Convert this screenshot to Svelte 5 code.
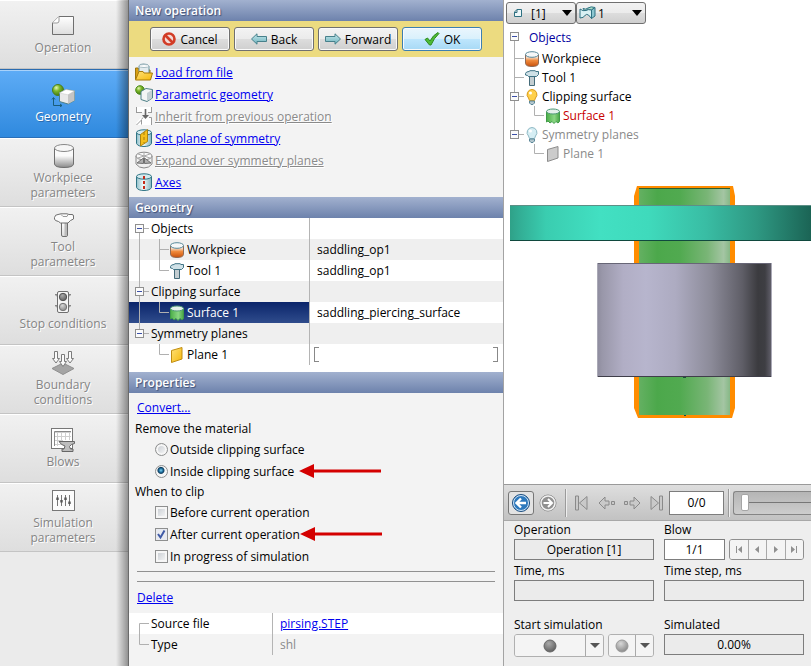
<script lang="ts">
  type Row = { label: string; icon?: string; value?: string; last?: boolean; selected?: boolean; field?: boolean };

  const steps = [
    { id: 'operation', label: 'Operation' },
    { id: 'geometry', label: 'Geometry' },
    { id: 'workpiece', label: 'Workpiece parameters' },
    { id: 'tool', label: 'Tool parameters' },
    { id: 'stop', label: 'Stop conditions' },
    { id: 'boundary', label: 'Boundary conditions' },
    { id: 'blows', label: 'Blows' },
    { id: 'simulation', label: 'Simulation parameters' }
  ];

  const actions = [
    { label: 'Load from file', icon: 'folder' },
    { label: 'Parametric geometry', icon: 'parametric' },
    { label: 'Inherit from previous operation', icon: 'inherit', disabled: true },
    { label: 'Set plane of symmetry', icon: 'symmetry' },
    { label: 'Expand over symmetry planes', icon: 'expand', disabled: true },
    { label: 'Axes', icon: 'axes' }
  ];

  const rows: Row[] = [
    { label: 'Objects' },
    { label: 'Workpiece', icon: 'billet', value: 'saddling_op1' },
    { label: 'Tool 1', icon: 'hammer', value: 'saddling_op1', last: true },
    { label: 'Clipping surface' },
    { label: 'Surface 1', icon: 'surface', value: 'saddling_piercing_surface', last: true, selected: true },
    { label: 'Symmetry planes' },
    { label: 'Plane 1', icon: 'plane', last: true, field: true }
  ];

  const sceneTree = [
    { label: 'Workpiece', icon: 'billet' },
    { label: 'Tool 1', icon: 'hammer' },
    { label: 'Clipping surface', icon: 'bulb', group: true },
    { label: 'Surface 1', icon: 'surface', child: true, tone: 'red' },
    { label: 'Symmetry planes', icon: 'bulb-off', group: true, end: true, tone: 'muted' },
    { label: 'Plane 1', icon: 'plane-off', child: true, end: true, tone: 'muted' }
  ];

  let activeStep = $state('geometry');
  let side = $state('inside');
  let before = $state(false);
  let after = $state(true);
  let during = $state(false);
</script>

<!-- Shared gradients -->
<svg class="defs" width="0" height="0" aria-hidden="true">
  <defs>
    <linearGradient id="g-page" x1="0" y1="0" x2="0" y2="1"><stop offset="0" stop-color="#fff" /><stop offset="1" stop-color="#ddd" /></linearGradient>
    <linearGradient id="g-cyl" x1="0" y1="0" x2="0" y2="1"><stop offset="0.4" stop-color="#fafafa" /><stop offset="1" stop-color="#8b8b8b" /></linearGradient>
    <linearGradient id="g-billet" x1="0" y1="0" x2="0" y2="1"><stop offset="0.15" stop-color="#f4f4f4" /><stop offset="0.5" stop-color="#f08a3c" /><stop offset="1" stop-color="#c8500a" /></linearGradient>
    <linearGradient id="g-surface" x1="0" y1="0" x2="1" y2="0"><stop offset="0" stop-color="#4cae48" /><stop offset="0.6" stop-color="#8ad683" /><stop offset="1" stop-color="#48a545" /></linearGradient>
    <linearGradient id="g-glass" x1="0" y1="0" x2="1" y2="0"><stop offset="0" stop-color="#8fbfc9" /><stop offset="0.45" stop-color="#f4fbfc" /><stop offset="1" stop-color="#83b5c0" /></linearGradient>
    <linearGradient id="g-gold" x1="0" y1="0" x2="1" y2="1"><stop offset="0" stop-color="#ffe27a" /><stop offset="1" stop-color="#f5b80a" /></linearGradient>
    <radialGradient id="g-ball" cx="0.35" cy="0.3" r="0.75"><stop offset="0" stop-color="#e4f7b4" /><stop offset="0.4" stop-color="#7db82a" /><stop offset="1" stop-color="#3d7310" /></radialGradient>
    <radialGradient id="g-grayball" cx="0.4" cy="0.3" r="0.75"><stop offset="0" stop-color="#aaa" /><stop offset="1" stop-color="#5c5c5c" /></radialGradient>
    <radialGradient id="g-lightball" cx="0.4" cy="0.3" r="0.75"><stop offset="0" stop-color="#d8d8d8" /><stop offset="1" stop-color="#858585" /></radialGradient>
    <linearGradient id="g-arrow" x1="0" y1="0" x2="0" y2="1"><stop offset="0" stop-color="#c6e8ec" /><stop offset="1" stop-color="#6db2bd" /></linearGradient>
    <linearGradient id="g-teal"><stop offset="0" stop-color="#2fa188" /><stop offset="0.03" stop-color="#32ad94" /><stop offset="0.12" stop-color="#3acdb0" /><stop offset="0.3" stop-color="#42e0c2" /><stop offset="0.46" stop-color="#3fdabc" /><stop offset="0.65" stop-color="#39bda4" /><stop offset="0.82" stop-color="#2e9882" /><stop offset="1" stop-color="#1b6455" /></linearGradient>
    <linearGradient id="g-green"><stop offset="0" stop-color="#64b062" /><stop offset="0.2" stop-color="#4ca84b" /><stop offset="0.45" stop-color="#51aa50" /><stop offset="0.75" stop-color="#79b576" /><stop offset="0.93" stop-color="#a4c5a3" /><stop offset="1" stop-color="#86b886" /></linearGradient>
    <linearGradient id="g-steel"><stop offset="0" stop-color="#8d8b9d" /><stop offset="0.03" stop-color="#9997a9" /><stop offset="0.15" stop-color="#b1aec5" /><stop offset="0.28" stop-color="#b7b5cd" /><stop offset="0.45" stop-color="#adabc1" /><stop offset="0.65" stop-color="#8c8b99" /><stop offset="0.83" stop-color="#5f5e67" /><stop offset="0.92" stop-color="#3b3b3f" /><stop offset="0.96" stop-color="#3e3e43" /><stop offset="1" stop-color="#65636f" /></linearGradient>
  </defs>
</svg>

{#snippet stepIcon(id: string)}
  <svg class="step-icon" width="24" height="24" viewBox="0 0 24 24" fill="none" stroke="#6f6f6f" aria-hidden="true">
    {#if id === 'operation'}
      <path d="M1.5 9 L8 2.5 H22.5 V20.5 H1.5 Z" fill="url(#g-page)" />
      <path d="M1.5 9 H6 Q8 9 8 7 V2.5" fill="#fff" stroke="#999" />
    {:else if id === 'geometry'}
      <circle cx="7" cy="7" r="5.5" fill="url(#g-ball)" stroke="#4c7f1c" />
      <path d="M8.5 10 L15 6.5 L23.5 8 V17.5 L17 21 L8.5 18.5 Z" fill="#e9e9e9" stroke="#4d8087" />
      <path d="M8.5 10 L15 6.5 L23.5 8 L17 11.8 Z" fill="#fff" stroke="#cfcfcf" stroke-width="0.6" />
      <path d="M17 11.8 L23.5 8 V17.5 L17 21 Z" fill="#c4c4c4" stroke="none" />
      <path d="M2.5 15 V22.5 H11 M1 16.5 L2.5 14.5 L4 16.5 M9 21 L11 22.5 L9 24" stroke="#1a5d78" />
    {:else if id === 'workpiece'}
      <path d="M3.5 4 V20 Q4 23.5 13 23.5 T22.5 20 V4" fill="url(#g-cyl)" />
      <ellipse cx="13" cy="4" rx="9.5" ry="3.5" fill="#f6f6f6" stroke="#888" />
    {:else if id === 'tool'}
      <path d="M10.5 9 H16.5 V22 Q16.5 23.5 15 23.5 H12 Q10.5 23.5 10.5 22 Z" fill="url(#g-page)" />
      <path d="M13.5 10 H16 V23 H13.5 Z" fill="#bbb" stroke="none" />
      <path d="M3.5 4.5 Q4 1.5 7 1.5 L10 0.8 H16 L18 1.5 H21 Q22.5 1.5 22.5 3 V6 L19.5 7.5 L17 10 H9.5 L7.5 8.5 L4.5 7.5 Q3 6 3.5 4.5 Z" fill="#fbfbfb" />
      <path d="M10 1.5 L12 3.5 H16 L17 1.5" stroke="#999" />
    {:else if id === 'stop'}
      <path d="M4 4.5 H7 V7 Z M20 4.5 H17 V7 Z M4 15.5 H7 V18 Z M20 15.5 H17 V18 Z" fill="#eee" stroke="#888" />
      <rect x="6.5" y="1.5" width="11" height="21" rx="1.5" fill="#f6f6f6" />
      <circle cx="12" cy="7" r="3.7" fill="url(#g-grayball)" stroke="#555" />
      <circle cx="12" cy="17" r="3.7" fill="url(#g-lightball)" stroke="#777" />
    {:else if id === 'boundary'}
      <path d="M1 17.5 L12 12 L23 17.5 L12 23.5 Z" fill="#a5a5a5" stroke="#8f8f8f" />
      <path d="M3.5 0.5 H6.5 V7.5 H8.5 L5 12 L1.5 7.5 H3.5 Z M17.5 0.5 H20.5 V7.5 H22.5 L19 12 L15.5 7.5 H17.5 Z M10.5 3.5 H13.5 V10.5 H15.5 L12 15.5 L8.5 10.5 H10.5 Z" fill="#fafafa" stroke="#7b7b7b" />
    {:else if id === 'blows'}
      <rect x="0.5" y="0.5" width="21" height="20" fill="#fff" stroke="#777" />
      <path d="M3 4.5 H20 M3 8.5 H20 M3 12.5 H12 M3 16.5 H10 M6.5 3 V18 M10.5 3 V17 M14.5 3 V12 M18.5 3 V12" stroke="#cfcfcf" />
      <path d="M3.5 18 V3.5 H20" stroke="#888" />
      <path d="M8 13.5 H23.5 V15.5 Q20 16 18.5 18.5 L19.5 21 H22 V23.5 H11 V21 H13 L14 18 Q10 17 8 13.5 Z" fill="#bdbdbd" stroke="#666" />
    {:else}
      <rect x="1.5" y="1.5" width="22" height="20" fill="#fcfcfc" stroke="#777" />
      <path d="M6.5 6 V17 M10.5 6 V17 M14.5 6 V17 M18.5 6 V17" stroke="#777" />
      <path d="M6.5 8.5 V11 M10.5 11 V13.5 M14.5 8.5 V11 M18.5 12.5 V15" stroke="#555" stroke-width="2.4" />
    {/if}
  </svg>
{/snippet}

{#snippet glyph(name: string)}
  <svg class="glyph" width="18" height="18" viewBox="0 0 18 18" fill="none" stroke="#2f7485" aria-hidden="true">
    {#if name === 'folder'}
      <path d="M0.5 16 V5 H3 L4.5 7 H15 V16 Z" fill="#d99f13" stroke="#9a7410" />
      <path d="M4 11 V3 Q4 1 8.5 1 T14 3 V11 Z" fill="#e3ebee" stroke="#6b94a0" />
      <ellipse cx="9" cy="3" rx="5" ry="1.5" fill="#fff" stroke="#a7bcc3" />
      <path d="M0.5 17 L4 8.5 H8 L9 10 H17.5 L15.5 17 Z" fill="url(#g-gold)" stroke="#a87b0b" />
    {:else if name === 'parametric'}
      <circle cx="5" cy="5" r="4.3" fill="url(#g-ball)" stroke="#4c8a1c" />
      <path d="M6 6.5 L11 3.5 L17.5 4.5 V13 L12 16.5 L6 14.5 Z" fill="#f3f5f5" stroke="#4d8087" />
      <path d="M12 8 L17 5 V13 L12 16 Z" fill="#c3cfd2" stroke="none" />
    {:else if name === 'inherit'}
      <path d="M1.5 0 V5.5 H16.5 V0" fill="#fff" stroke="none" />
      <path d="M1 5.5 H7 M13 5.5 H17 M1.5 0 V5 M16.5 0 V5" stroke="#9a9a9a" />
      <path d="M1.5 18 V15.5 L6 10.5 H16.5 V18" fill="#fff" stroke="none" />
      <path d="M1.5 18 L6.5 13 V17.5 M6.5 12.5 L8 10.5 M14 10.5 H16.5 V18" stroke="#9a9a9a" />
      <path d="M10.5 2 V8" stroke="#666" stroke-width="1.6" />
      <path d="M7 8 H14 L10.5 12 Z" fill="#666" stroke="none" />
    {:else if name === 'symmetry' || name === 'axes'}
      <path d="M1.5 3.5 V14.5 Q3 17.5 9 17.5 T16.5 14.5 V3.5" fill="url(#g-glass)" />
      <ellipse cx="9" cy="3.5" rx="7.5" ry="2.7" fill="#d3e9ed" />
      {#if name === 'symmetry'}
        <path d="M5.5 5.5 L12.5 0.5 V12.5 L5.5 17 Z" fill="#f4bf1c" stroke="#ad8412" />
        <path d="M9 3 V14" stroke="#a77d08" stroke-dasharray="3 2" />
      {:else}
        <path d="M9 3 V16" stroke="#c62b1a" stroke-width="2" stroke-dasharray="3 2" />
      {/if}
    {:else if name === 'expand'}
      <path d="M1 5 V13 Q4 17 9 17 T17 13 V5" fill="#f0f0f0" stroke="#888" />
      <ellipse cx="9" cy="5" rx="8" ry="3.8" fill="#fafafa" stroke="#888" />
      <path d="M9 1 V8 M3 3 L15 7 M15 3 L3 7" stroke="#aaa" />
      <path d="M2 12 L8.5 7 V12.5 Z M9.5 7 L16 12 L9.5 12.5 Z" fill="#b0b0b0" stroke="#707070" />
    {/if}
  </svg>
{/snippet}

{#snippet node(name: string)}
  <svg class="node" width="16" height="16" viewBox="0 0 16 16" fill="none" stroke="#4b7280" aria-hidden="true">
    {#if name === 'billet'}
      <path d="M1.5 3.5 V12.5 Q2 15.5 8 15.5 T14.5 12.5 V3.5" fill="url(#g-billet)" stroke="#8f6a55" />
      <ellipse cx="8" cy="3.5" rx="6.5" ry="2.8" fill="#f5f7f8" stroke="#58899a" />
    {:else if name === 'hammer'}
      <path d="M5.5 6 H10.5 V15.5 H5.5 Z" fill="#c3cdd1" stroke="#456b79" />
      <path d="M1.5 3.5 Q2 1.5 5 1.5 L6 0.7 H11 L12 1.5 H14.5 V4.5 L12.5 6.5 H4.5 L3.5 5.5 L1.5 5 Z" fill="#cfe1e7" stroke="#3f7385" />
    {:else if name === 'surface'}
      <path d="M1.5 3.5 V14 L3 13 L5 15 L7 13.5 L9 15.5 L11 13.5 L13 15 L14.5 13.5 V3.5 Z" fill="url(#g-surface)" stroke="#3f9b48" />
      <ellipse cx="8" cy="3.5" rx="6.5" ry="2.5" fill="#e4f0ea" stroke="#4f9a78" />
    {:else if name === 'plane'}
      <path d="M2.5 3.5 L13 0.5 V12 L2.5 15.5 Z" fill="url(#g-gold)" stroke="#c08c10" />
    {:else if name === 'plane-off'}
      <path d="M2.5 3.5 L13 0.5 V12 L2.5 15.5 Z" fill="#cbcbcb" stroke="#8c8c8c" />
    {:else}
      <path d="M8 0.5 A5 5 0 0 1 11.5 9 L10.5 11.5 H5.5 L4.5 9 A5 5 0 0 1 8 0.5 Z" fill={name === 'bulb' ? '#ffd04a' : '#d6eef4'} stroke={name === 'bulb' ? '#d89a1e' : '#8fb9c4'} />
      <circle cx="6.5" cy="4" r="1.5" fill="#fff" stroke="none" />
      <path d="M5.5 12 H10.5 V14 L9 15.5 H7 L5.5 14 Z" fill="#b3c6cd" stroke="#5b8798" />
    {/if}
  </svg>
{/snippet}

{#snippet pointer()}
  <svg class="pointer" width="82" height="16" viewBox="0 0 82 16" aria-hidden="true">
    <path d="M0 8 L15 1 V6.5 H82 V9.5 H15 V15 Z" fill="#d40000" />
  </svg>
{/snippet}

<div class="app">
  <nav class="steps" aria-label="Operation steps">
    {#each steps as step}
      <button class="step" class:active={activeStep === step.id} onclick={() => (activeStep = step.id)}>
        {@render stepIcon(step.id)}
        <span class="step-label">{step.label}</span>
      </button>
    {/each}
  </nav>

  <main class="editor">
    <h1 class="bar">New operation</h1>
    <div class="buttons">
      <button class="btn">
        <svg width="14" height="14" viewBox="0 0 14 14" aria-hidden="true">
          <circle cx="7" cy="7" r="5.5" fill="#f3d9d5" stroke="#d23c26" stroke-width="2.6" />
          <path d="M3 3 L11 11" stroke="#d23c26" stroke-width="2.6" />
        </svg>
        Cancel
      </button>
      <button class="btn">
        <svg width="16" height="12" viewBox="0 0 16 12" aria-hidden="true">
          <path d="M0.5 6 L6 0.8 V3.5 H15.5 V8.5 H6 V11.2 Z" fill="url(#g-arrow)" stroke="#47808b" />
        </svg>
        Back
      </button>
      <button class="btn">
        <svg width="16" height="12" viewBox="0 0 16 12" aria-hidden="true">
          <path d="M15.5 6 L10 0.8 V3.5 H0.5 V8.5 H10 V11.2 Z" fill="url(#g-arrow)" stroke="#47808b" />
        </svg>
        Forward
      </button>
      <button class="btn primary">
        <svg width="16" height="14" viewBox="0 0 16 14" aria-hidden="true">
          <path d="M1 7.5 L3.5 6 L6 9 Q9 3 14 0.5 L15 1.5 Q10 6 7 13 H5.5 Z" fill="#4dbb35" stroke="#2f8a20" />
        </svg>
        OK
      </button>
    </div>

    <ul class="actions">
      {#each actions as action}
        <li>
          {@render glyph(action.icon)}
          <a href="#action" class:disabled={action.disabled} aria-disabled={action.disabled}>{action.label}</a>
        </li>
      {/each}
    </ul>

    <h2 class="bar">Geometry</h2>
    <div class="sheet">
      <table class="grid">
        <tbody>
          {#each rows as row, i}
            <tr class:selected={row.selected}>
              <td class="name">
                <div class="cell">
                  {#if row.icon}
                    <svg class="lines" width="40" height="21" viewBox="0 0 40 21" aria-hidden="true">
                      {#if i < 6}<path d="M10.5 0 V21" />{/if}
                      <path d={row.last ? 'M30.5 0 V10.5 H40' : 'M30.5 0 V21 M30.5 10.5 H40'} />
                    </svg>
                    {@render node(row.icon)}
                  {:else}
                    <svg class="lines" width="22" height="21" viewBox="0 0 22 21" aria-hidden="true">
                      <path d={i === 0 ? 'M10.5 10 V21' : i === 5 ? 'M10.5 0 V10' : 'M10.5 0 V21'} />
                      <path d="M14 10.5 H20" />
                      <rect class="box" x="6.5" y="6.5" width="8" height="8" />
                      <path class="minus" d="M8 10.5 H13" />
                    </svg>
                  {/if}
                  {row.label}
                </div>
              </td>
              <td class="value">
                {#if row.field}<span class="slot"></span>{:else}{row.value ?? ''}{/if}
              </td>
            </tr>
          {/each}
        </tbody>
      </table>
    </div>

    <h2 class="bar">Properties</h2>
    <div class="props">
      <p class="link-row"><a href="#convert">Convert...</a></p>

      <fieldset>
        <legend>Remove the material</legend>
        <div class="option">
          <label><input type="radio" name="side" value="outside" bind:group={side} />Outside clipping surface</label>
        </div>
        <div class="option">
          <label><input type="radio" name="side" value="inside" bind:group={side} />Inside clipping surface</label>
          {@render pointer()}
        </div>
      </fieldset>

      <fieldset>
        <legend>When to clip</legend>
        <div class="option">
          <label><input type="checkbox" bind:checked={before} />Before current operation</label>
        </div>
        <div class="option">
          <label><input type="checkbox" bind:checked={after} />After current operation</label>
          {@render pointer()}
        </div>
        <div class="option">
          <label><input type="checkbox" bind:checked={during} />In progress of simulation</label>
        </div>
      </fieldset>

      <hr />
      <hr />
      <p class="link-row delete"><a href="#delete">Delete</a></p>

      <table class="grid source">
        <tbody>
          <tr>
            <td class="name">
              <div class="cell">
                <svg class="lines" width="22" height="21" viewBox="0 0 22 21" aria-hidden="true"><path d="M20 10.5 H10.5 V21" /></svg>
                Source file
              </div>
            </td>
            <td class="value"><a href="#source">pirsing.STEP</a></td>
          </tr>
          <tr>
            <td class="name">
              <div class="cell">
                <svg class="lines" width="22" height="21" viewBox="0 0 22 21" aria-hidden="true"><path d="M10.5 0 V10.5 H20" /></svg>
                Type
              </div>
            </td>
            <td class="value muted">shl</td>
          </tr>
        </tbody>
      </table>
    </div>
  </main>

  <section class="view">
    <div class="pickers">
      <div class="picker">
        <svg width="10" height="10" viewBox="0 0 10 10" aria-hidden="true">
          <path d="M1.5 4 L4 1.5 H8.5 V8.5 H1.5 Z M1.5 4.5 H4 V1.5" fill="#eef7f9" stroke="#2e7182" />
        </svg>
        <select aria-label="Operation"><option>[1]</option></select>
        <svg class="caret" width="10" height="6" viewBox="0 0 10 6" aria-hidden="true"><path d="M0 0 H10 L5 6 Z" /></svg>
      </div>
      <div class="picker blow">
        <svg width="17" height="14" viewBox="0 0 17 14" aria-hidden="true">
          <path d="M4 2.5 Q7 4 9 2 Q12 0 16 1.5 L12.5 4 Q9 2 6 5 Z" fill="#a9dcc6" stroke="#2e7182" />
          <path d="M1 3 Q4 5.5 7 4.5 Q9 3 12.5 4 V12.5 L9.5 9 Q7.5 7.5 6 9.5 Q4.5 12 1 12 Z" fill="#d9f1f4" stroke="#2e7182" />
          <path d="M12.5 4 L16 1.5 V10 L12.5 12.5 Z" fill="#8cc6d0" stroke="#2e7182" />
        </svg>
        <select aria-label="Blow number"><option>1</option></select>
        <svg class="caret" width="10" height="6" viewBox="0 0 10 6" aria-hidden="true"><path d="M0 0 H10 L5 6 Z" /></svg>
      </div>
    </div>

    <ul class="scene-tree">
      <li class="root">
        <svg class="lines" width="25" height="23" viewBox="0 0 25 23" aria-hidden="true">
          <path d="M10.5 11 V23" />
          <rect class="box" x="6.5" y="6.5" width="8" height="8" />
          <path class="minus" d="M8 10.5 H13" />
        </svg>
        Objects
      </li>
      {#each sceneTree as item}
        <li class={item.tone}>
          {#if item.child}
            <svg class="lines" width="41" height="19" viewBox="0 0 41 19" aria-hidden="true">
              {#if !item.end}<path d="M10.5 0 V19" />{/if}
              <path d="M30.5 0 V9.5 H40" />
            </svg>
          {:else}
            <svg class="lines" width="20" height="19" viewBox="0 0 20 19" aria-hidden="true">
              <path d={item.end ? 'M10.5 0 V9' : 'M10.5 0 V19'} />
              <path d="M10.5 9.5 H20" />
              {#if item.group}
                <rect class="box" x="6.5" y="5.5" width="8" height="8" />
                <path class="minus" d="M8 9.5 H13" />
              {/if}
            </svg>
          {/if}
          {@render node(item.icon)}
          {item.label}
        </li>
      {/each}
    </ul>

    <svg class="scene" viewBox="0 0 307 319" role="img" aria-label="Side view of tool, workpiece and clipping surface">
      <!-- clipping surface with highlight outline -->
      <path d="M133 22 H229 L231 32 V244 L228 254 H134 L130 244 V32 Z" fill="#ff8c00" />
      <rect x="135" y="24" width="91" height="227" fill="url(#g-green)" />
      <path d="M135 24.5 H226" stroke="#2c5f2c" />
      <!-- tool -->
      <rect x="6" y="41" width="301" height="36" fill="url(#g-teal)" />
      <path d="M6 41.5 H307" stroke="#5d8f86" />
      <path d="M6 76.5 H307" stroke="#10493e" />
      <!-- workpiece -->
      <rect x="93" y="99" width="175" height="114" fill="url(#g-steel)" />
      <path d="M93 99.5 H268" stroke="#676676" />
      <path d="M93 212.5 H268" stroke="#3f3e49" />
      <path d="M93.5 99 V213 M267.5 99 V213" stroke="#aaa9b6" />
      <path d="M179 213.5 H182 M180 251.5 H182" stroke="#1b4f3a" />
    </svg>

    <div class="player">
      <button class="round pressed" aria-label="Backward">
        <svg width="20" height="20" viewBox="0 0 20 20" fill="none">
          <circle cx="10" cy="10" r="8.5" fill="#2d79bd" stroke="#1f4f80" />
          <circle cx="10" cy="10" r="7.5" stroke="#cfe2f3" />
          <path d="M15 10 H6 M10 5.5 L5.5 10 L10 14.5" stroke="#fff" stroke-width="2.4" />
        </svg>
      </button>
      <button class="round" aria-label="Forward">
        <svg width="20" height="20" viewBox="0 0 20 20" fill="none">
          <circle cx="10" cy="10" r="8" fill="#919191" stroke="#8a8a8a" />
          <circle cx="10" cy="10" r="7" stroke="#f2f2f2" stroke-width="1.5" />
          <path d="M5.5 10 H14 M10 6 L14 10 L10 14" stroke="#fff" stroke-width="2" />
        </svg>
      </button>
      <span class="sep"></span>
      <div class="nav">
        <button aria-label="First"><svg width="15" height="16" viewBox="0 0 15 16"><path d="M1.5 1 H4.5 V15 H1.5 Z M13 1.5 V14.5 L5.5 8 Z" /></svg></button>
        <button aria-label="Previous"><svg width="18" height="14" viewBox="0 0 18 14"><path d="M1 7 L7 1 V5 H11 V9 H7 V13 Z M13.5 5.5 H16.5 V8.5 H13.5 Z" /></svg></button>
        <button aria-label="Next"><svg width="18" height="14" viewBox="0 0 18 14"><path d="M17 7 L11 1 V5 H7 V9 H11 V13 Z M1.5 5.5 H4.5 V8.5 H1.5 Z" /></svg></button>
        <button aria-label="Last"><svg width="15" height="16" viewBox="0 0 15 16"><path d="M13.5 1 H10.5 V15 H13.5 Z M2 1.5 V14.5 L9.5 8 Z" /></svg></button>
      </div>
      <input class="frame" type="text" value="0/0" aria-label="Frame" />
      <span class="sep"></span>
      <div class="track"><input type="range" min="0" max="100" value="0" aria-label="Timeline" /></div>
    </div>

    <div class="status">
      <div class="field">
        <label for="op">Operation</label>
        <input id="op" class="readonly" type="text" value="Operation [1]" readonly />
      </div>
      <div class="field">
        <label for="blow">Blow</label>
        <div class="row">
          <input id="blow" type="text" value="1/1" />
          <div class="pager">
            <button aria-label="First blow"><svg width="8" height="7" viewBox="0 0 8 7"><path d="M1 0 H2 V7 H1 Z M7 0 V7 L3 3.5 Z" /></svg></button>
            <button aria-label="Previous blow"><svg width="8" height="7" viewBox="0 0 8 7"><path d="M6 0 V7 L2 3.5 Z" /></svg></button>
            <button aria-label="Next blow"><svg width="8" height="7" viewBox="0 0 8 7"><path d="M2 0 V7 L6 3.5 Z" /></svg></button>
            <button aria-label="Last blow"><svg width="8" height="7" viewBox="0 0 8 7"><path d="M7 0 H6 V7 H7 Z M1 0 V7 L5 3.5 Z" /></svg></button>
          </div>
        </div>
      </div>
      <div class="field">
        <label for="time">Time, ms</label>
        <input id="time" class="readonly" type="text" readonly />
      </div>
      <div class="field">
        <label for="time-step">Time step, ms</label>
        <input id="time-step" class="readonly" type="text" readonly />
      </div>
      <div class="field last">
        <span class="caption">Start simulation</span>
        <div class="row">
          <div class="split wide">
            <button aria-label="Start"><svg width="14" height="14" viewBox="0 0 14 14"><circle cx="7" cy="7" r="6" fill="url(#g-grayball)" stroke="#666" /></svg></button>
            <button class="drop" aria-label="Start options"><svg width="10" height="5" viewBox="0 0 10 5"><path d="M0 0 H10 L5 5 Z" fill="#555" /></svg></button>
          </div>
          <div class="split">
            <button aria-label="Stop"><svg width="14" height="14" viewBox="0 0 14 14"><circle cx="7" cy="7" r="6" fill="url(#g-lightball)" stroke="#999" /></svg></button>
            <button class="drop" aria-label="Stop options"><svg width="10" height="5" viewBox="0 0 10 5"><path d="M0 0 H10 L5 5 Z" fill="#555" /></svg></button>
          </div>
        </div>
      </div>
      <div class="field last">
        <label for="done">Simulated</label>
        <input id="done" class="readonly" type="text" value="0.00%" readonly />
      </div>
    </div>
  </section>
</div>

<style>
  :global(body) {
    font-family: "Segoe UI", "Open Sans", "Noto Sans", sans-serif;
    font-size: 12px;
    line-height: 15px;
    color: #000;
    background: #f3f3f3;
  }
  button, input, select { font: inherit; color: inherit; }
  button { padding: 0; cursor: pointer; }
  svg { display: block; flex-shrink: 0; }
  .defs { position: absolute; }
  a { color: #0000f0; text-decoration: underline; }
  ul { list-style: none; margin: 0; padding: 0; }
  p { margin: 0; }

  .app {
    display: grid;
    grid-template-columns: 128px minmax(0, 376px) minmax(0, 1fr);
    min-height: 100vh;
  }

  /* ── Step list ── */
  .steps {
    position: relative;
    background: #ebebeb;
  }
  .steps::after {
    content: '';
    position: absolute;
    top: 0;
    right: 0;
    bottom: 0;
    width: 12px;
    background: linear-gradient(to right, transparent, rgba(0, 0, 0, 0.38));
    pointer-events: none;
  }
  .step {
    box-sizing: border-box;
    width: 100%;
    min-height: 69px;
    padding: 0 2px 1px 0;
    display: flex;
    flex-direction: column;
    align-items: center;
    justify-content: center;
    gap: 2px;
    border: none;
    border-top: 1px solid #fff;
    border-bottom: 1px solid #c4c4c4;
    background: linear-gradient(#f1f1f1, #dedede);
    color: #858585;
    text-shadow: 1px 1px 0 #fff;
  }
  .step-label { max-width: 90px; }
  .step.active {
    border-top-color: #2b6cb0;
    border-bottom-color: #2a6fb8;
    background: linear-gradient(#5eacf6, #2f89de);
    box-shadow: inset 0 1px 0 #a9d2fa;
    color: #fff;
    text-shadow: 1px 1px 0 #2b6cb0;
  }

  /* ── Editor column ── */
  .editor {
    display: flex;
    flex-direction: column;
    border-left: 1px solid #6a6a6a;
    border-right: 1px solid #a3a3a3;
  }
  .bar {
    margin: 0;
    padding: 0 6px;
    font-size: 12px;
    line-height: 21px;
    font-weight: 600;
    color: #fff;
    text-shadow: 1px 1px 1px #3f5178;
    background: linear-gradient(#a2b1cf, #6d82ac);
  }
  .buttons {
    display: flex;
    justify-content: center;
    gap: 4px;
    padding: 6px;
    background: #ecdb80;
  }
  .btn {
    box-sizing: border-box;
    width: 80px;
    height: 24px;
    display: flex;
    align-items: center;
    justify-content: center;
    gap: 4px;
    border: 1px solid #707070;
    border-radius: 3px;
    background: linear-gradient(#f3f3f3, #ebebeb 50%, #dddddd 50%, #cfcfcf);
    box-shadow: inset 0 0 0 1px #fafafa;
  }
  .btn.primary {
    border-color: #3c7fb1;
    background: linear-gradient(#eaf6fd, #d9f0fc 50%, #bee6fd 50%, #a7d9f5);
  }

  .actions { padding: 4px 6px; }
  .actions li {
    display: flex;
    align-items: center;
    gap: 2px;
    height: 22px;
  }
  .actions a.disabled { color: #8a8a8a; text-shadow: 1px 1px 0 #fff; }

  /* ── Property grids ── */
  .sheet { background: #fff; padding-bottom: 7px; }
  .grid {
    width: 100%;
    border-collapse: collapse;
    table-layout: fixed;
  }
  .grid td { padding: 0; height: 21px; }
  .grid .name { width: 180px; border-right: 1px solid #b4b4b4; }
  .grid .value { padding-left: 7px; }
  .cell {
    display: flex;
    align-items: center;
    height: 21px;
    white-space: nowrap;
  }
  .cell .node { margin-right: 2px; }
  .sheet tr:nth-child(even) { background: #efefef; }
  .sheet tr.selected { background: #fff; }
  .sheet tr.selected .name {
    color: #fff;
    background: linear-gradient(#0a246a, #2f4c8c);
  }
  .lines { fill: none; stroke: #b0b0b0; }
  .lines .box { fill: #fbfbfb; stroke: #8f8f8f; }
  .lines .minus { stroke: #3c50a8; }
  .slot {
    display: block;
    height: 15px;
    margin: 0 5px 0 -3px;
    background:
      linear-gradient(#888, #888) left top / 4px 1px,
      linear-gradient(#888, #888) left bottom / 4px 1px,
      linear-gradient(#888, #888) right top / 4px 1px,
      linear-gradient(#888, #888) right bottom / 4px 1px;
    background-repeat: no-repeat;
    border: solid #888;
    border-width: 0 1px;
  }
  .source .name { width: 143px; }
  .source tr:first-child { background: #fff; }
  .muted { color: #8a8a8a; }

  /* ── Properties ── */
  .props { padding-top: 4px; }
  .link-row { padding-left: 8px; line-height: 22px; }
  fieldset { border: none; margin: 0; padding: 0 6px; }
  legend { padding: 0; line-height: 19px; }
  .option {
    display: flex;
    align-items: center;
    height: 22px;
    padding-left: 20px;
  }
  .option label {
    display: flex;
    align-items: center;
    gap: 2px;
    min-width: 144px;
    white-space: nowrap;
  }
  .option input {
    appearance: none;
    box-sizing: border-box;
    width: 13px;
    height: 13px;
    margin: 0;
    border: 1px solid #8e8f8f;
    background: linear-gradient(135deg, #c3c8ce, #fbfbfb);
    box-shadow: inset 0 0 0 2px #f6f6f6;
  }
  .option input[type='radio'] { border-radius: 50%; }
  .option input[type='radio']:checked {
    background: radial-gradient(circle at 45% 40%, #7fd3f2 0, #1c6c9c 2px, #123d5c 3px, #f6f6f6 4px);
    box-shadow: none;
  }
  .option input[type='checkbox']:checked {
    background: url("data:image/svg+xml,%3Csvg xmlns='http://www.w3.org/2000/svg' viewBox='0 0 11 11'%3E%3Cpath d='M2 5 L4.5 8.5 L8.5 1.5' fill='none' stroke='%233f5aa6' stroke-width='2'/%3E%3C/svg%3E") #e8eaf0;
    box-shadow: none;
  }
  hr {
    margin: 4px 8px 0;
    border: none;
    border-top: 1px solid #919191;
  }
  hr + hr { margin-top: 9px; }
  .delete { padding-top: 5px; padding-bottom: 4px; }

  /* ── 3D view ── */
  .view {
    display: flex;
    flex-direction: column;
    background: #fff;
  }
  .pickers { display: flex; padding: 2px 2px 0; }
  .picker {
    position: relative;
    box-sizing: border-box;
    width: 70px;
    height: 22px;
    display: flex;
    align-items: center;
    padding-left: 6px;
    border: 1px solid #707070;
    border-radius: 3px;
    background: linear-gradient(#f2f2f2, #ebebeb 50%, #dddddd 50%, #cfcfcf);
  }
  .picker select {
    appearance: none;
    flex: 1;
    min-width: 0;
    padding: 0 0 0 8px;
    border: none;
    background: none;
  }
  .picker.blow { padding-left: 2px; }
  .picker.blow select { padding-left: 2px; }
  .caret {
    position: absolute;
    right: 3px;
    top: 7px;
    pointer-events: none;
  }
  .scene-tree li {
    display: flex;
    align-items: center;
    height: 19px;
    white-space: nowrap;
  }
  .scene-tree .root { height: 23px; padding-top: 2px; color: #0000a0; }
  .scene-tree .node { margin-right: 2px; }
  .scene-tree .red { color: #c80000; }
  .scene-tree .muted { color: #8a8a8a; }
  .scene { width: 100%; flex: 1; min-height: 0; }

  /* ── Player ── */
  .player {
    display: flex;
    align-items: center;
    height: 35px;
    padding-left: 4px;
    overflow: hidden;
    border-top: 1px solid #9a9a9a;
    border-bottom: 1px solid #a8a8a8;
    background: linear-gradient(#dedede, #c2c2c2);
  }
  .player button {
    display: flex;
    align-items: center;
    justify-content: center;
    flex-shrink: 0;
    height: 24px;
    box-sizing: border-box;
    border: none;
    background: none;
  }
  .player .round { width: 26px; }
  .player .round + .round { margin-left: 1px; }
  .player .round.pressed {
    border: 1px solid #777;
    border-radius: 3px;
    background: #e3e3e3;
  }
  .sep {
    flex-shrink: 0;
    width: 1px;
    height: 28px;
    margin: 0 3px 0 4px;
    background: #9b9b9b;
    box-shadow: 1px 0 0 #eee;
  }
  .nav { display: flex; }
  .nav button { width: 25px; }
  .nav svg { fill: #c9c9c9; stroke: #8a8a8a; }
  .frame, .field input {
    box-sizing: border-box;
    min-width: 0;
    padding: 0;
    border: 1px solid #7d7d7d;
    background: #fff;
    text-align: center;
  }
  .frame { flex-shrink: 0; width: 55px; height: 24px; }
  .track {
    flex: 1;
    min-width: 0;
    box-sizing: border-box;
    height: 24px;
    padding-left: 7px;
    display: flex;
    align-items: center;
    margin-left: 1px;
    border: 1px solid #858585;
    border-right: none;
    border-radius: 3px 0 0 3px;
    background: linear-gradient(#b5b5b5, #cdcdcd);
  }
  .track input {
    appearance: none;
    width: 100%;
    height: 17px;
    margin: 0;
    background: linear-gradient(#777, #777) center / 100% 1px no-repeat;
  }
  .track input::-webkit-slider-thumb {
    appearance: none;
    width: 8px;
    height: 17px;
    border: 1px solid #a5a5a5;
    border-radius: 2px;
    background: #fff;
  }

  /* ── Status form ── */
  .status {
    display: grid;
    grid-template-columns: 1fr 1fr;
    gap: 2px 10px;
    padding: 0 7px 9px 10px;
    background: #eee;
  }
  .field {
    display: flex;
    flex-direction: column;
    min-width: 0;
  }
  .field label, .caption { line-height: 18px; }
  .field input { height: 21px; }
  .field input.readonly { background: #ebebeb; }
  .field.last { padding-top: 13px; }
  .row { display: flex; gap: 4px; }
  .row input { flex: 1; }
  .pager, .split {
    display: flex;
    box-sizing: border-box;
    border: 1px solid #8f8f8f;
    border-radius: 3px;
    overflow: hidden;
  }
  .pager { width: 75px; height: 21px; }
  .pager button, .split button {
    flex: 1;
    display: flex;
    align-items: center;
    justify-content: center;
    border: none;
    background: #f4f4f4;
  }
  .pager button + button, .split button + button { border-left: 1px solid #a9a9a9; }
  .pager svg { fill: #909090; }
  .split {
    width: 46px;
    height: 23px;
    border-color: #b0b0b0;
  }
  .split.wide { flex: 1; }
  .split .drop { flex: 0 0 18px; }
</style>
